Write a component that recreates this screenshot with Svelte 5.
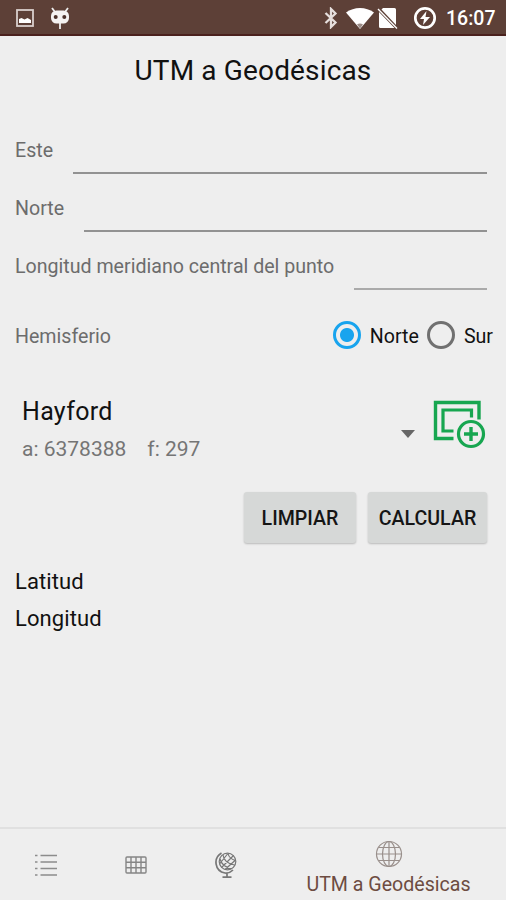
<script lang="ts">
	let este = $state('');
	let norte = $state('');
	let meridiano = $state('');
	let hemisferio = $state('norte');
	let elipsoide = $state({ nombre: 'Hayford', a: 6378388, f: 297 });

	function limpiar() {
		este = '';
		norte = '';
		meridiano = '';
	}
</script>

<div class="screen">
	<header class="status-bar">
		<div class="status-left">
			<svg width="18" height="18" viewBox="0 0 18 18">
				<rect x="1" y="1" width="16" height="16" fill="none" stroke="#d9cfcc" stroke-width="1.8" />
				<path d="M3 14v-4l2.500-1 3 1.500 3-1.500L15 11v3z" fill="#fff" />
			</svg>
			<svg class="cat" width="20" height="23" viewBox="0 0 20 23">
				<path d="M2 1l3 4M18 1l-3 4M10 15v7" stroke="#eee" stroke-width="1.8" fill="none" />
				<rect x="1" y="3.500" width="18" height="13" rx="5.5" fill="#f5f2f1" />
				<circle cx="5.7" cy="10" r="2" fill="#4b302a" />
				<circle cx="14.3" cy="10" r="2" fill="#4b302a" />
			</svg>
		</div>
		<div class="status-right">
			<svg class="bluetooth" width="14" height="22" viewBox="0 0 14 22">
				<path d="M1.5 6l10 9.5L7 20V2l4.500 4.500L1.500 16" fill="none" stroke="#e6dfdd" stroke-width="2.300" />
			</svg>
			<svg class="wifi" width="28" height="21" viewBox="0 0 28 21">
				<path d="M0 4.500C8-1.500 20-1.500 28 4.500L14 21z" fill="#fff" />
				<path d="M11 16.500q3-2 6 0L14 20.500z" fill="#9c8c87" />
			</svg>
			<svg class="sim" width="21" height="23" viewBox="0 0 21 23">
				<path d="M6 1h11.500q1.500 0 1.500 1.500V18L4.500 2.500zM2 5l15.500 16H3.500Q2 21 2 19.500z" fill="#fff" />
				<path d="M1 2l19 19.500" stroke="#fff" stroke-width="1.300" />
			</svg>
			<svg class="power" width="24" height="24" viewBox="0 0 24 24">
				<circle cx="12" cy="12" r="9.700" fill="none" stroke="#fff" stroke-width="2.700" />
				<path d="M13.500 5l-6.500 8h4l-1 6 7-8h-4.500z" fill="#fff" />
			</svg>
			<span class="clock">16:07</span>
		</div>
	</header>

	<h1>UTM a Geodésicas</h1>

	<main>
		<label class="field">
			<span>Este</span>
			<input type="text" bind:value={este} />
		</label>
		<label class="field">
			<span>Norte</span>
			<input type="text" bind:value={norte} />
		</label>
		<label class="field last">
			<span>Longitud meridiano central del punto</span>
			<input type="text" bind:value={meridiano} />
		</label>

		<div class="hemisphere">
			<span class="caption">Hemisferio</span>
			<label class="radio">
				<input type="radio" value="norte" bind:group={hemisferio} />
				<span>Norte</span>
			</label>
			<label class="radio">
				<input type="radio" value="sur" bind:group={hemisferio} />
				<span>Sur</span>
			</label>
		</div>

		<div class="ellipsoid">
			<div class="ellipsoid-text">
				<div class="name">{elipsoide.nombre}</div>
				<div class="params">
					<span>a: {elipsoide.a}</span>
					<span>f: {elipsoide.f}</span>
				</div>
			</div>
			<svg class="arrow" width="14" height="8" viewBox="0 0 14 8">
				<path d="M0 0h14L7 8z" fill="#666" />
			</svg>
			<svg class="add" width="54" height="50" viewBox="0 0 54 50" fill="none" stroke="#17a650">
				<path d="M20.500 38.500H2.500V2.500H46V19.500" stroke-width="3.400" />
				<path d="M20.500 31H10V10H38.500V17.500" stroke-width="3.200" />
				<circle cx="38" cy="34" r="12.500" stroke-width="3.200" />
				<path d="M38 27v14M31 34h14" stroke-width="3.400" />
			</svg>
		</div>

		<div class="buttons">
			<button class="clear" onclick={limpiar}>LIMPIAR</button>
			<button class="calc">CALCULAR</button>
		</div>

		<div class="results">
			<div>Latitud</div>
			<div>Longitud</div>
		</div>
	</main>

	<nav>
		<div class="tab">
			<svg width="22" height="24" viewBox="0 0 22 24" stroke="#8c8c8c" stroke-width="1.500">
				<path d="M0 2.500h2.500M0 9h2.500M0 15.500h2.500M0 22h2.500M5.500 2.500H22M5.500 9H22M5.500 15.500H22M5.500 22H22" />
			</svg>
		</div>
		<div class="tab">
			<svg width="22" height="18" viewBox="0 0 22 18" fill="none" stroke="#858585" stroke-width="1.400">
				<rect x="1" y="1" width="20" height="16" rx="1" />
				<path d="M6 1v16M11 1v16M16 1v16M1 6.300h20M1 11.700h20" />
			</svg>
		</div>
		<div class="tab">
			<svg width="22" height="27" viewBox="0 0 22 27" fill="none" stroke="#777" stroke-width="1.200">
				<circle cx="12.500" cy="9.500" r="8.300" />
				<path d="M6.500 1C-2 6 -.5 19 10 21q4.500 .5 8-3M12 21V25M7.500 25.200h9" stroke-width="1.700" />
				<path d="M6.500 15.500l12-12M4.500 12l8-10M10 17.500l10-9M5 7q2 8 12 9.500M8 3q1 8 11.500 10M13 1.500q1 5 7.500 7" />
			</svg>
		</div>
		<div class="tab active">
			<svg width="28" height="28" viewBox="0 0 28 28" fill="none" stroke="#998f8b" stroke-width="1.200">
				<circle cx="14" cy="14" r="12.500" />
				<ellipse cx="14" cy="14" rx="6.500" ry="12.500" />
				<path d="M14 1.500v25M1.500 14h25M3.500 7.500h21M3.500 20.500h21" />
			</svg>
			<span>UTM a Geodésicas</span>
		</div>
	</nav>
</div>

<style>
	:global(body) {
		margin: 0;
		background: #eee;
	}

	.screen {
		display: flex;
		flex-direction: column;
		height: 900px;
		background: #eee;
		font-family: Roboto, "Liberation Sans", sans-serif;
		color: #111;
		overflow: hidden;
	}

	svg {
		display: block;
		flex: none;
	}

	.status-bar {
		display: flex;
		justify-content: space-between;
		box-sizing: border-box;
		height: 36px;
		padding: 0 10px 0 16px;
		background: #5d4037;
		border-bottom: 2px solid #4a211d;
	}

	.status-left,
	.status-right {
		display: flex;
		align-items: center;
		height: 36px;
	}

	.cat {
		margin-left: 16px;
	}

	.wifi {
		margin-left: 8px;
	}

	.sim {
		margin-left: 3px;
	}

	.power {
		margin-left: 15px;
	}

	.clock {
		width: 50px;
		margin-left: 9px;
		padding-top: 2px;
		color: #fff;
		font-size: 19.5px;
		font-weight: 500;
		line-height: 38px;
		white-space: nowrap;
	}

	h1 {
		margin: 0;
		height: 80px;
		padding-top: 17px;
		box-sizing: border-box;
		font-size: 28px;
		font-weight: 400;
		line-height: 36px;
		letter-spacing: 0.15px;
		text-align: center;
	}

	main {
		flex: 1;
	}

	.field {
		display: flex;
		height: 58px;
		margin: 0 19px 0 15px;
		color: #6c6c6c;
		font-size: 19.6px;
	}

	.field span {
		padding-top: 23px;
		line-height: 24px;
		white-space: nowrap;
	}

	.field input {
		flex: 1;
		min-width: 0;
		margin-left: 19.5px;
		padding: 0;
		border: 0;
		border-bottom: 2px solid #929292;
		background: none;
		font: inherit;
		outline: none;
	}

	.field.last input {
		border-color: #aaa;
	}

	.hemisphere {
		display: flex;
		align-items: center;
		height: 60px;
		margin-top: 15px;
		padding: 0 13px 0 15px;
		font-size: 19.6px;
	}

	.caption {
		flex: 1;
		padding-top: 2px;
		color: #6c6c6c;
	}

	.radio {
		display: flex;
		align-items: center;
		gap: 9px;
	}

	.radio + .radio {
		margin-left: 8px;
		gap: 9px;
	}

	.radio span {
		padding-top: 2px;
	}

	.radio input {
		appearance: none;
		box-sizing: border-box;
		width: 28px;
		height: 28px;
		margin: 0;
		border: 3px solid #707070;
		border-radius: 50%;
	}

	.radio input:checked {
		border-color: #18a4ee;
		background: radial-gradient(circle, #18a4ee 6.500px, transparent 7.500px);
	}

	.ellipsoid {
		display: flex;
		align-items: flex-start;
		height: 106px;
		margin-top: 21px;
		padding: 0 19px 0 22px;
	}

	.ellipsoid-text {
		flex: 1;
		padding-top: 11px;
	}

	.name {
		font-size: 25px;
		line-height: 30px;
		letter-spacing: 0.3px;
	}

	.params {
		display: flex;
		gap: 21px;
		margin-top: 9px;
		color: #757575;
		font-size: 21px;
		line-height: 26px;
	}

	.arrow {
		margin-top: 44px;
	}

	.add {
		margin: 14px 0 0 18px;
	}

	.buttons {
		display: flex;
		justify-content: flex-end;
		gap: 12px;
		padding-right: 19px;
	}

	button {
		height: 51px;
		padding: 2px 0 0;
		border: 0;
		border-radius: 3px;
		background: #d6d8d7;
		box-shadow: 0 1px 2px rgba(0, 0, 0, 0.22);
		color: #151515;
		font-family: inherit;
		font-size: 19.6px;
		font-weight: 500;
	}

	.clear {
		width: 112px;
	}

	.calc {
		width: 119px;
	}

	.results {
		margin-top: 20px;
		padding-left: 15px;
		font-size: 22px;
		line-height: 37px;
		letter-spacing: 0.1px;
	}

	nav {
		display: flex;
		box-sizing: border-box;
		height: 73px;
		border-top: 2px solid #e0e0e0;
	}

	.tab {
		display: flex;
		align-items: center;
		justify-content: center;
		box-sizing: border-box;
		width: 90px;
		padding: 1px 0 0 1px;
	}

	.tab.active {
		flex: 1;
		flex-direction: column;
		justify-content: flex-start;
		padding: 11px 0 0 1px;
		color: #6d4c41;
		font-size: 19.6px;
		line-height: 24px;
	}

	.tab.active span {
		margin-top: 5px;
	}
</style>
